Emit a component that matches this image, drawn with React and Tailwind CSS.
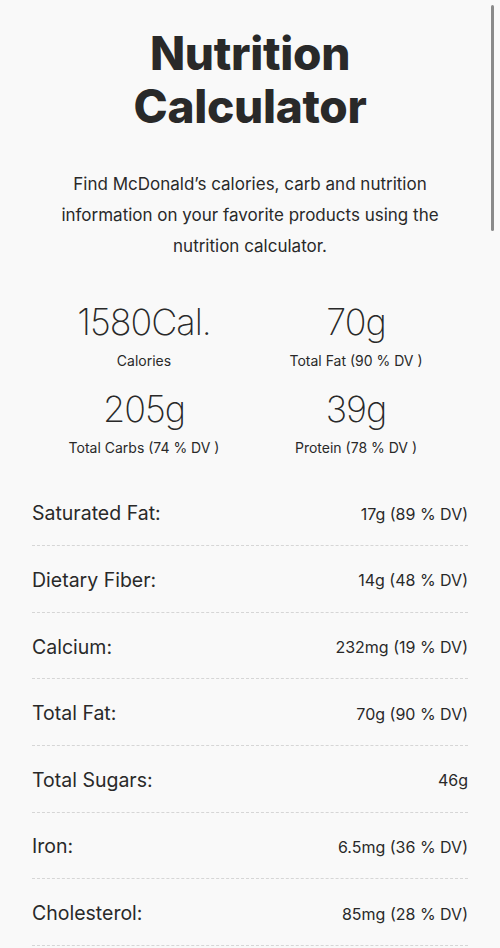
const stats = [
  { value: '1580Cal.', label: 'Calories' },
  { value: '70g', label: 'Total Fat (90 % DV )' },
  { value: '205g', label: 'Total Carbs (74 % DV )' },
  { value: '39g', label: 'Protein (78 % DV )' },
]

const rows = [
  ['Saturated Fat:', '17g (89 % DV)'],
  ['Dietary Fiber:', '14g (48 % DV)'],
  ['Calcium:', '232mg (19 % DV)'],
  ['Total Fat:', '70g (90 % DV)'],
  ['Total Sugars:', '46g'],
  ['Iron:', '6.5mg (36 % DV)'],
  ['Cholesterol:', '85mg (28 % DV)'],
]

export default function App() {
  return (
    <div className="relative min-h-screen bg-[#f9f9f9] text-[#292929] font-['Inter',sans-serif]">
      {/* scroll indicator */}
      <div className="absolute right-[6px] top-[5px] h-[226px] w-[3px] rounded-full bg-[#8a8a8a]" />

      <div className="px-8 pt-[27px]">
        <h1 className="text-center text-[46px] font-extrabold leading-[53px] tracking-[-0.3px]">
          Nutrition
          <br />
          Calculator
        </h1>

        <p className="mx-auto mt-[36px] max-w-[400px] text-center text-[17px] leading-[31px]">
          Find McDonald’s calories, carb and nutrition information on your favorite products using the
          nutrition calculator.
        </p>

        <div className="mt-[38px] grid grid-cols-2 gap-y-[16px] px-[6px]">
          {stats.map((s) => (
            <div key={s.label} className="flex flex-col items-center">
              <div className="text-[36px] font-extralight leading-[44px] tracking-[-1px]">{s.value}</div>
              <div className="mt-[7px] text-[14px] leading-[20px]">{s.label}</div>
            </div>
          ))}
        </div>

        <div className="mt-[21.5px]">
          {rows.map(([k, v]) => (
            <div
              key={k}
              className="flex h-[66.67px] items-center justify-between border-b border-dashed border-[#d6d6d6] pt-[3px]"
            >
              <span className="text-[19.5px]">{k}</span>
              <span className="text-[16px]">{v}</span>
            </div>
          ))}
        </div>
      </div>
    </div>
  )
}
